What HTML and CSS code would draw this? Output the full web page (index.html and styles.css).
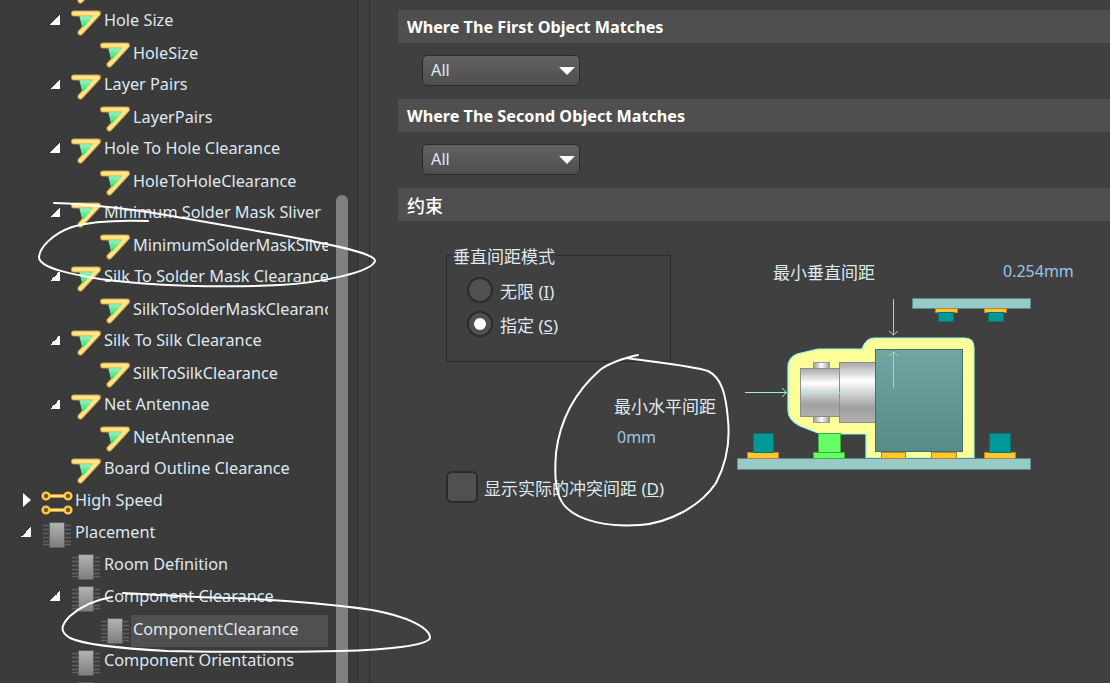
FILE: index.html
```html
<!DOCTYPE html>
<html lang="en">
<head>
    <meta charset="UTF-8">
    <title>PCB Rules and Constraints</title>
    <link rel="stylesheet" href="styles.css">
</head>
<body>
    <!-- shared icons -->
    <svg class="defs" width="0" height="0">
        <defs>
            <linearGradient id="funnel-green" x1="0" y1="0" x2="0" y2="1">
                <stop offset="0" stop-color="#96f4bc"/>
                <stop offset="1" stop-color="#22e06c"/>
            </linearGradient>
            <linearGradient id="chip-body" x1="0" y1="0" x2="0" y2="1">
                <stop offset="0" stop-color="#b4b4b4"/>
                <stop offset="1" stop-color="#7c7c7c"/>
            </linearGradient>
            <linearGradient id="metal" x1="0" y1="0" x2="0" y2="1">
                <stop offset="0" stop-color="#a8a8a8"/>
                <stop offset="0.3" stop-color="#ffffff"/>
                <stop offset="0.75" stop-color="#a0a0a0"/>
                <stop offset="1" stop-color="#b0b0b0"/>
            </linearGradient>
            <linearGradient id="nub" x1="0" y1="0" x2="1" y2="0">
                <stop offset="0" stop-color="#999"/>
                <stop offset="0.5" stop-color="#fff"/>
                <stop offset="1" stop-color="#999"/>
            </linearGradient>
            <linearGradient id="teal-body" x1="0" y1="0" x2="0" y2="1">
                <stop offset="0" stop-color="#70a5a3"/>
                <stop offset="1" stop-color="#578b89"/>
            </linearGradient>
            <symbol id="i-rule" viewBox="0 0 30 26">
                <path d="M8 5H26L12 21Z" fill="url(#funnel-green)"/>
                <path d="M3 3.500H27L9.500 22.500" fill="none" stroke="#cfa044" stroke-width="6" stroke-linecap="round" stroke-linejoin="round"/>
                <path d="M3 3.500H27L9.500 22.500" fill="none" stroke="#ffe688" stroke-width="4" stroke-linecap="round" stroke-linejoin="round"/>
                <path d="M10 6.500H22.500L12 17.500Z" fill="url(#funnel-green)"/>
            </symbol>
            <symbol id="i-chip" viewBox="0 0 28 26">
                <path d="M0 3.500H28M0 7.500H28M0 11.500H28M0 15.500H28M0 19.500H28M0 22.500H28" stroke="#626262" stroke-width="1.600"/>
                <rect x="6.500" y="0.500" width="15" height="25" fill="url(#chip-body)" stroke="#5c5c5c"/>
            </symbol>
            <symbol id="i-speed" viewBox="0 0 32 24">
                <path d="M5 5H27M5 19H27" stroke="#c8963a" stroke-width="4"/>
                <path d="M5 5H27M5 19H27" stroke="#ffe27e" stroke-width="2"/>
                <g fill="#6e5a24" stroke="#ffc94a" stroke-width="2.400">
                    <circle cx="5" cy="5" r="3.400"/><circle cx="27" cy="5" r="3.400"/>
                    <circle cx="5" cy="19" r="3.400"/><circle cx="27" cy="19" r="3.400"/>
                </g>
            </symbol>
        </defs>
    </svg>

    <div class="app">
        <aside class="side">
            <ul class="tree">
                <li class="row lvl1 row-cut"><span class="tw"></span><svg class="ic"><use href="#i-rule"/></svg></li>
                <li class="row lvl1"><span class="tw open"></span><svg class="ic"><use href="#i-rule"/></svg><span>Hole Size</span></li>
                <li class="row lvl2"><span class="tw"></span><svg class="ic"><use href="#i-rule"/></svg><span>HoleSize</span></li>
                <li class="row lvl1"><span class="tw open"></span><svg class="ic"><use href="#i-rule"/></svg><span>Layer Pairs</span></li>
                <li class="row lvl2"><span class="tw"></span><svg class="ic"><use href="#i-rule"/></svg><span>LayerPairs</span></li>
                <li class="row lvl1"><span class="tw open"></span><svg class="ic"><use href="#i-rule"/></svg><span>Hole To Hole Clearance</span></li>
                <li class="row lvl2"><span class="tw"></span><svg class="ic"><use href="#i-rule"/></svg><span>HoleToHoleClearance</span></li>
                <li class="row lvl1"><span class="tw open"></span><svg class="ic"><use href="#i-rule"/></svg><span>Minimum Solder Mask Sliver</span></li>
                <li class="row lvl2"><span class="tw"></span><svg class="ic"><use href="#i-rule"/></svg><span>MinimumSolderMaskSliver</span></li>
                <li class="row lvl1"><span class="tw open"></span><svg class="ic"><use href="#i-rule"/></svg><span>Silk To Solder Mask Clearance</span></li>
                <li class="row lvl2"><span class="tw"></span><svg class="ic"><use href="#i-rule"/></svg><span>SilkToSolderMaskClearance</span></li>
                <li class="row lvl1"><span class="tw open"></span><svg class="ic"><use href="#i-rule"/></svg><span>Silk To Silk Clearance</span></li>
                <li class="row lvl2"><span class="tw"></span><svg class="ic"><use href="#i-rule"/></svg><span>SilkToSilkClearance</span></li>
                <li class="row lvl1"><span class="tw open"></span><svg class="ic"><use href="#i-rule"/></svg><span>Net Antennae</span></li>
                <li class="row lvl2"><span class="tw"></span><svg class="ic"><use href="#i-rule"/></svg><span>NetAntennae</span></li>
                <li class="row lvl1"><span class="tw"></span><svg class="ic"><use href="#i-rule"/></svg><span>Board Outline Clearance</span></li>
                <li class="row lvl0"><span class="tw closed"></span><svg class="ic ic-wide"><use href="#i-speed"/></svg><span>High Speed</span></li>
                <li class="row lvl0"><span class="tw open"></span><svg class="ic"><use href="#i-chip"/></svg><span>Placement</span></li>
                <li class="row lvl1"><span class="tw"></span><svg class="ic"><use href="#i-chip"/></svg><span>Room Definition</span></li>
                <li class="row lvl1"><span class="tw open"></span><svg class="ic"><use href="#i-chip"/></svg><span>Component Clearance</span></li>
                <li class="row lvl2"><span class="tw"></span><svg class="ic"><use href="#i-chip"/></svg><span class="selected">ComponentClearance</span></li>
                <li class="row lvl1"><span class="tw"></span><svg class="ic"><use href="#i-chip"/></svg><span>Component Orientations</span></li>
                <li class="row lvl1"><span class="tw"></span><svg class="ic"><use href="#i-chip"/></svg></li>
            </ul>
            <div class="scrollbar"><div class="thumb"></div></div>
        </aside>

        <main class="content">
            <h2 class="sec-head">Where The First Object Matches</h2>
            <div class="sec-body"><div class="combo"><span>All</span><i class="caret"></i></div></div>

            <h2 class="sec-head">Where The Second Object Matches</h2>
            <div class="sec-body"><div class="combo"><span>All</span><i class="caret"></i></div></div>

            <h2 class="sec-head cjk">约束</h2>
            <div class="constraint">
                <div class="options">
                    <fieldset class="group">
                        <legend>垂直间距模式</legend>
                        <div class="radio"><i class="dot"></i><span>无限 (<u>I</u>)</span></div>
                        <div class="radio"><i class="dot on"></i><span>指定 (<u>S</u>)</span></div>
                    </fieldset>
                    <div class="check"><i class="box"></i><span>显示实际的冲突间距 (<u>D</u>)</span></div>
                </div>

                <div class="figure">
                    <span class="dim dim-v">最小垂直间距</span>
                    <span class="dim-val val-v">0.254mm</span>
                    <span class="dim dim-h">最小水平间距</span>
                    <span class="dim-val val-h">0mm</span>
                    <svg class="drawing" width="300" height="180" viewBox="735 295 300 180">
                        <!-- connector outline with clearance -->
                        <path d="M866 458V434H841L818 433L800 426Q788 420 788 410V367Q788 358 797 354L818 349H862Q866 338 874 338H965Q974 338 974 348V458Z" fill="#ffff99" stroke="#8ffff0" stroke-width="1.200"/>
                        <rect x="813.500" y="362.500" width="16" height="60" fill="url(#nub)" stroke="#999"/>
                        <rect x="800.500" y="368.500" width="39" height="48" fill="url(#metal)" stroke="#8c8c8c"/>
                        <rect x="839.500" y="362.500" width="36" height="60" fill="url(#metal)" stroke="#8c8c8c"/>
                        <rect x="875.500" y="349.500" width="87" height="102" fill="url(#teal-body)" stroke="#3f6f6e"/>
                        <!-- boards -->
                        <rect x="912.500" y="298.500" width="118" height="10" fill="#97cbca" stroke="#5f8a88"/>
                        <rect x="737.500" y="458.500" width="293" height="11" fill="#97cbca" stroke="#5f8a88"/>
                        <!-- pads and parts -->
                        <g fill="#ffc62e" stroke="#b5882a">
                            <rect x="935.500" y="308.500" width="22" height="4"/>
                            <rect x="984.500" y="308.500" width="22" height="4"/>
                            <rect x="747.500" y="452.500" width="31" height="6"/>
                            <rect x="984.500" y="452.500" width="31" height="6"/>
                            <rect x="881.500" y="452.500" width="24" height="6"/>
                            <rect x="931.500" y="452.500" width="25" height="6"/>
                        </g>
                        <g fill="#009999" stroke="#0a7272">
                            <rect x="938.500" y="312.500" width="15" height="9"/>
                            <rect x="988.500" y="312.500" width="15" height="9"/>
                            <rect x="753.500" y="433.500" width="20" height="19"/>
                            <rect x="989.500" y="433.500" width="21" height="19"/>
                        </g>
                        <g fill="#66ff66" stroke="#3cb043">
                            <rect x="818.500" y="433.500" width="22" height="19"/>
                            <rect x="813.500" y="452.500" width="31" height="6"/>
                        </g>
                        <!-- clearance arrows -->
                        <g fill="none" stroke="#b8d88a">
                            <path d="M893.500 299V335M889 331L893.500 335L898 331"/>
                            <path d="M893.500 388V352M889 356L893.500 352L898 356"/>
                        </g>
                        <g fill="none" stroke="#8ff5ea">
                            <path d="M745 392.500H786M782 388L786.500 392.500L782 397"/>
                            <path d="M843 392.500H804M808 388L803.500 392.500L808 397"/>
                        </g>
                    </svg>
                </div>
            </div>
        </main>
    </div>

    <!-- pen marks somebody drew over the screenshot -->
    <svg class="ink" width="1110" height="683" viewBox="0 0 1110 683">
        <path d="M148 221C120 220 92 221 72 227C52 234 39 248 39 258C41 268 70 274 100 279C150 286 220 288 280 285C320 283 372 272 375 261C376 254 340 246 280 235C240 228 200 221 177 217C140 210 90 204 54 203"/>
        <path d="M638 355C625 358 610 362 600 370C575 392 560 420 556 453C554 480 556 495 564 505C578 522 610 527 640 525C668 523 700 507 716 483C727 462 730 440 728 420C726 395 722 378 708 371C695 366 655 362 626 358"/>
        <path d="M123 593C160 595 190 597 230 598C280 600 330 604 372 610C405 616 430 627 430 638C428 645 390 650 340 651C290 652 220 652 167 651C130 649 85 645 70 638C60 632 60 626 70 616C80 607 95 600 112 597"/>
    </svg>
</body>
</html>
```

FILE: styles.css
```css
/* Rules dialog, dark theme */
* {
    box-sizing: border-box;
}

html, body {
    height: 100%;
}

body {
    margin: 0;
    overflow: hidden;
    background-color: #404040;
    color: #dfe8ef;
    font-family: "Noto Sans", "Noto Sans CJK SC", sans-serif;
    font-size: 16.25px;
}

.defs {
    display: block;
    height: 0;
}

.app {
    display: flex;
    height: 683px;
}

/* Tree side */
.side {
    display: flex;
    flex: 0 0 358px;
    background-color: #3b3b3b;
    border-right: 1px solid #2f2f2f;
}

.tree {
    flex: 0 0 328px;
    margin: 0;
    padding: 0;
    list-style: none;
    overflow: hidden;
}

.row {
    display: flex;
    align-items: center;
    height: 32px;
    white-space: nowrap;
}

.row-cut {
    margin-top: -28px;
}

.lvl0 { padding-left: 19px; }
.lvl1 { padding-left: 48px; }
.lvl2 { padding-left: 77px; }

.lvl2 span:last-child {
    padding-top: 2px;
}

.tw {
    flex: 0 0 23px;
    width: 23px;
    height: 12px;
}

.tw.open {
    background: linear-gradient(to bottom right, transparent 50%, #fff 50%) 2px 1px / 10px 10px no-repeat;
}

.tw.closed {
    flex: 0 0 0;
    width: 0;
    height: 14px;
    margin-left: 4px;
    margin-right: 11px;
    border-left: 8px solid #fff;
    border-top: 7px solid transparent;
    border-bottom: 7px solid transparent;
}

.ic {
    flex: 0 0 30px;
    width: 30px;
    height: 26px;
    margin-top: 6px;
    margin-right: 3px;
}

.ic-wide {
    flex: 0 0 32px;
    width: 32px;
    margin-left: -1px;
    margin-right: 2px;
}

.lvl2 .selected {
    flex: 1;
    align-self: flex-start;
    height: 32px;
    margin-top: 3px;
    margin-left: -2px;
    padding: 0 0 0 2px;
    line-height: 24px;
    background-color: #505050;
}

.scrollbar {
    flex: 0 0 12px;
    margin-left: 8px;
    padding-top: 195px;
}

.thumb {
    height: 100%;
    background-color: #808080;
    border-radius: 6px 6px 0 0;
}

/* Right side */
.content {
    flex: 1;
    min-width: 0;
    padding: 10px 0 0 28px;
    margin-left: 11px;
    border-left: 1px solid #2f2f2f;
}

.sec-head {
    display: flex;
    align-items: center;
    height: 33px;
    margin: 0;
    padding-left: 9px;
    background-color: #4f4f4f;
    color: #fff;
    font-size: 16.2px;
    font-weight: 700;
}

.sec-head.cjk {
    font-size: 18px;
    font-weight: 500;
}

.sec-body {
    padding: 12px 0 13px 24px;
}

.combo {
    display: flex;
    align-items: center;
    justify-content: space-between;
    width: 158px;
    height: 31px;
    padding: 0 4px 2px 8px;
    background: linear-gradient(#626262, #4e4e4e);
    border: 1px solid #2a2a2a;
    border-radius: 5px;
}

.caret {
    width: 0;
    height: 0;
    margin-top: 2px;
    border-left: 8px solid transparent;
    border-right: 8px solid transparent;
    border-top: 8px solid #fff;
}

.constraint {
    display: flex;
    height: 460px;
}

.options {
    flex: 0 0 273px;
    padding: 22px 0 0 48px;
}

.group {
    width: 225px;
    height: 119px;
    margin: 0;
    padding: 6px 0 0;
    border: 1px solid #2a2a2a;
}

.group legend {
    margin-left: 5px;
    padding: 4px 1px 0;
    font-size: 17px;
    line-height: 20px;
}

.radio {
    display: flex;
    align-items: center;
    gap: 7px;
    height: 34px;
    margin-left: 20px;
    font-size: 17px;
}

.dot {
    display: flex;
    align-items: center;
    justify-content: center;
    width: 26px;
    height: 26px;
    background-color: #505050;
    border: 2px solid #2a2a2a;
    border-radius: 50%;
}

.dot.on::after {
    content: "";
    width: 12px;
    height: 12px;
    background-color: #fff;
    border-radius: 50%;
}

.check {
    display: flex;
    align-items: center;
    gap: 6px;
    margin-top: 109px;
    font-size: 17px;
    white-space: nowrap;
}

.box {
    width: 32px;
    height: 32px;
    background-color: #505050;
    border: 2px solid #2a2a2a;
    border-radius: 6px;
}

/* Drawing with its dimension labels */
.figure {
    position: relative;
    flex: 1;
}

.drawing {
    position: absolute;
    left: 64px;
    top: 74px;
}

.dim {
    position: absolute;
    font-size: 17px;
    white-space: nowrap;
}

.dim-val {
    position: absolute;
    color: #9cc4e8;
    font-size: 16px;
    white-space: nowrap;
}

.dim-v { left: 102px; top: 38px; }
.val-v { left: 332px; top: 39px; }
.dim-h { left: -57px; top: 172px; }
.val-h { left: -54px; top: 205px; }

/* Pen marks */
.ink {
    position: absolute;
    left: 0;
    top: 0;
    pointer-events: none;
}

.ink path {
    fill: none;
    stroke: #fff;
    stroke-width: 2;
    stroke-linecap: round;
    stroke-linejoin: round;
}
```
